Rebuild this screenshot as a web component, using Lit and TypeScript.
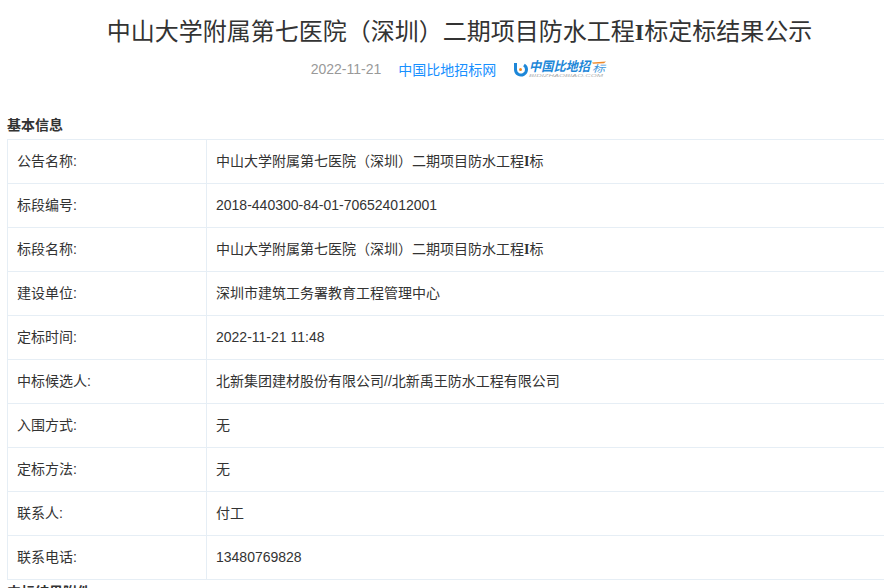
import { LitElement, html, css, svg } from "lit";
import { customElement } from "lit/decorators.js";

const rows: [string, string][] = [
  ["公告名称:", "中山大学附属第七医院\uFF08深圳\uFF09二期项目防水工程I标"],
  ["标段编号:", "2018-440300-84-01-706524012001"],
  ["标段名称:", "中山大学附属第七医院\uFF08深圳\uFF09二期项目防水工程I标"],
  ["建设单位:", "深圳市建筑工务署教育工程管理中心"],
  ["定标时间:", "2022-11-21 11:48"],
  ["中标候选人:", "北新集团建材股份有限公司//北新禹王防水工程有限公司"],
  ["入围方式:", "无"],
  ["定标方法:", "无"],
  ["联系人:", "付工"],
  ["联系电话:", "13480769828"],
];

@customElement("app-root")
export class AppRoot extends LitElement {
  static styles = css`
    :host {
      display: block;
      width: 884px;
      height: 588px;
      overflow: hidden;
      background: #fff;
      color: #333;
      font-family: "Liberation Sans", "Noto Sans CJK SC", sans-serif;
    }
    .title {
      margin: 0;
      padding: 16px 0 0 35px;
      height: 32px;
      line-height: 32px;
      font-size: 24px;
      font-weight: 400;
      text-align: center;
      color: #333;
    }
    .serif-i {
      font-family: "Liberation Serif", serif;
      font-weight: 700;
    }
    .meta {
      display: flex;
      align-items: center;
      justify-content: center;
      height: 24px;
      margin-top: 9px;
      padding-left: 34px;
      font-size: 14px;
    }
    .date { color: #999; margin-right: 17px; }
    .src { color: #1890ff; margin-right: 17px; }
    .logo { display: block; }
    .section {
      margin: 0;
      padding: 0 0 0 7px;
      margin-top: 32px;
      height: 26px;
      line-height: 24px;
      font-size: 14px;
      font-weight: 700;
      color: #333;
    }
    .tbl {
      margin-left: 7px;
      width: 900px;
      border-top: 1px solid #e6eef5;
      border-left: 1px solid #e6eef5;
    }
    .row {
      display: grid;
      grid-template-columns: 199px 1fr;
      height: 43px;
      border-bottom: 1px solid #e6eef5;
      align-items: center;
      font-size: 14px;
      line-height: 20px;
    }
    .k {
      height: 100%;
      box-sizing: border-box;
      display: flex;
      align-items: center;
      padding: 0 0 1px 9px;
      border-right: 1px solid #e6eef5;
    }
    .v { padding: 0 0 1px 9px; }
    .next {
      margin: 0;
      padding: 0 0 0 7px;
      height: 24px;
      line-height: 24px;
      font-size: 14px;
      font-weight: 700;
    }
  `;

  withSerifI(text: string) {
    const parts = text.split("I");
    return parts.map((p, i) =>
      i === 0 ? p : html`<span class="serif-i">I</span>${p}`
    );
  }

  logo() {
    return html`<svg class="logo" width="94" height="18" viewBox="0 0 94 18">
      ${svg`<path d="M2.5 3 V9.5 a5.5 5.5 0 1 0 8.5 -4.6" fill="none" stroke="#1d87d8" stroke-width="3"/>
      <circle cx="7.5" cy="9.5" r="1.5" fill="#f08a24"/>
      <path d="M79 2.5 L93 1.5 L91 3.2 L80 3.8 Z" fill="#ef8a2a"/>
      <text x="16" y="11" font-size="13" font-weight="700" font-style="italic" fill="#1d87d8" textLength="61" lengthAdjust="spacingAndGlyphs">中国比地招</text>
      <text x="79" y="11.5" font-size="9.5" font-style="italic" fill="#3f97dc" textLength="13" lengthAdjust="spacingAndGlyphs">标</text>
      <text x="16" y="17" font-size="4" font-style="italic" fill="#b0b0b0" textLength="74" lengthAdjust="spacingAndGlyphs">BIDIZHAOBIAO.COM</text>`}
    </svg>`;
  }

  render() {
    return html`
      <h1 class="title">${this.withSerifI("中山大学附属第七医院\uFF08深圳\uFF09二期项目防水工程I标定标结果公示")}</h1>
      <div class="meta">
        <span class="date">2022-11-21</span>
        <span class="src">中国比地招标网</span>
        ${this.logo()}
      </div>
      <h2 class="section">基本信息</h2>
      <div class="tbl">
        ${rows.map(
          ([k, v]) => html`<div class="row"><div class="k">${k}</div><div class="v">${this.withSerifI(v)}</div></div>`
        )}
      </div>
      <h2 class="next">中标结果附件</h2>
    `;
  }
}
